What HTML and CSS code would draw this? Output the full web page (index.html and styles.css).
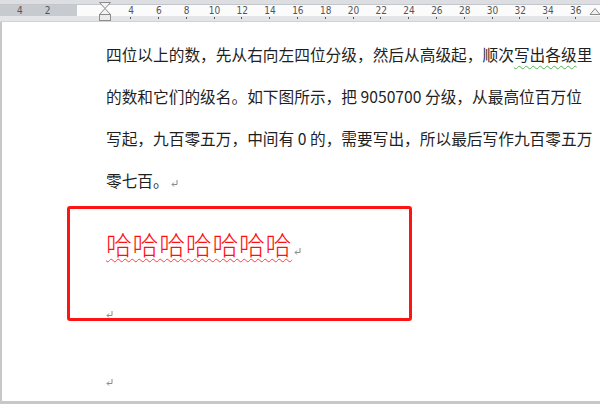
FILE: index.html
```html
<!DOCTYPE html>
<html lang="zh-CN">
<head>
<meta charset="utf-8">
<title>文档</title>
<link rel="stylesheet" href="styles.css">
</head>
<body>
<div class="ruler">
  <div class="ruler-top"></div>
  <div class="ruler-band">
    <span class="num">4</span><span class="num">2</span><span class="num"></span><span class="num"></span><span class="num">4</span><span class="num">6</span><span class="num">8</span><span class="num">10</span><span class="num">12</span><span class="num">14</span><span class="num">16</span><span class="num">18</span><span class="num">20</span><span class="num">22</span><span class="num">24</span><span class="num">26</span><span class="num">28</span><span class="num">30</span><span class="num">32</span><span class="num">34</span><span class="num">36</span>
  </div>
  <div class="ruler-ticks">
    <span class="tick"></span><span class="tick"></span><span class="tick"></span><span class="tick"></span><span class="tick on"></span><span class="tick on"></span><span class="tick on"></span><span class="tick on"></span><span class="tick on"></span><span class="tick on"></span><span class="tick on"></span><span class="tick on"></span><span class="tick on"></span><span class="tick on"></span><span class="tick on"></span><span class="tick on"></span><span class="tick on"></span><span class="tick on"></span><span class="tick on"></span><span class="tick on"></span><span class="tick on"></span>
  </div>
  <svg class="indent-marker" width="14" height="20" viewBox="0 0 14 20">
    <path d="M1.5 0.5 H12.5 L7 6.5 Z" fill="#f2f2f2" stroke="#8c8c8c"/>
    <path d="M7 6.5 L1.5 12.5 H12.5 Z" fill="#f2f2f2" stroke="#8c8c8c"/>
    <rect x="1.5" y="12.5" width="11" height="6" fill="#ececec" stroke="#8c8c8c"/>
  </svg>
  <svg class="right-marker" width="12" height="10" viewBox="0 0 12 10">
    <path d="M1 8.5 L6 2.5 L11 8.5 Z" fill="#f0f0f0" stroke="#8c8c8c"/>
  </svg>
</div>

<div class="page">
  <div class="doc">
    <p class="para">四位以上的数，先从右向左四位分级，然后从高级起，顺次<span class="grammar">写出各级</span>里<br>的数和它们的级名。如下图所示，把 9050700 分级，从最高位百万位<br>写起，九百零五万，中间有 0 的，需要写出，所以最后写作九百零五万<br>零七百。<svg class="ret" width="7" height="7" viewBox="0 0 7 7"><path d="M6 0 V4.5 H1.2" fill="none" stroke="#8a8a8a"/><path d="M3 2.5 L1 4.5 L3 6.5" fill="none" stroke="#8a8a8a"/></svg></p>
    <p class="ha"><span class="spell">哈哈哈哈哈哈哈</span><svg class="ret" width="7" height="7" viewBox="0 0 7 7"><path d="M6 0 V4.5 H1.2" fill="none" stroke="#8a8a8a"/><path d="M3 2.5 L1 4.5 L3 6.5" fill="none" stroke="#8a8a8a"/></svg></p>
    <p class="empty first"><svg class="ret" width="7" height="7" viewBox="0 0 7 7"><path d="M6 0 V4.5 H1.2" fill="none" stroke="#8a8a8a"/><path d="M3 2.5 L1 4.5 L3 6.5" fill="none" stroke="#8a8a8a"/></svg></p>
    <p class="empty second"><svg class="ret" width="7" height="7" viewBox="0 0 7 7"><path d="M6 0 V4.5 H1.2" fill="none" stroke="#8a8a8a"/><path d="M3 2.5 L1 4.5 L3 6.5" fill="none" stroke="#8a8a8a"/></svg></p>
  </div>
  <div class="red-box"></div>
</div>
<div class="bottom-bar"></div>
</body>
</html>
```

FILE: styles.css
```css
html, body {
  margin: 0;
  padding: 0;
}
body {
  width: 600px;
  height: 404px;
  overflow: hidden;
  background: #ffffff;
  position: relative;
  font-family: "Noto Sans CJK SC", "Noto Sans", sans-serif;
}
.ruler {
  position: relative;
  height: 22px;
  background: #e3e4e6;
}
.ruler-top {
  height: 4px;
  background: #dcdee1;
}
.ruler-band {
  display: flex;
  box-sizing: border-box;
  height: 12px;
  padding-left: 6px;
  background: linear-gradient(to right, #c7cbd0 0, #c7cbd0 77px, #fbfbfb 77px, #fbfbfb 100%);
  border-top: 1px solid #c3c6ca;
}
.num {
  flex: 0 0 27.8px;
  text-align: center;
  font-family: "Liberation Sans Narrow", "DejaVu Sans Condensed", "Liberation Sans", sans-serif;
  font-size: 10px;
  line-height: 11px;
  color: #555555;
}
.ruler-ticks {
  display: flex;
  height: 5px;
  padding-left: 6px;
  background: #e4e5e7;
  border-bottom: 1px solid #d0d2d5;
}
.tick {
  flex: 0 0 27.8px;
  position: relative;
}
.tick.on::after {
  content: "";
  position: absolute;
  left: 13px;
  top: 1px;
  width: 1px;
  height: 2px;
  background: #5a5a5a;
}
.indent-marker {
  position: absolute;
  left: 98px;
  top: 2px;
}
.right-marker {
  position: absolute;
  left: 589px;
  top: 6px;
}
.page {
  position: relative;
  height: 379px;
  border-left: 2px solid #c8c8c8;
  box-sizing: border-box;
}
.doc {
  padding-left: 104px;
  padding-top: 12px;
}
.doc p {
  margin: 0;
  white-space: nowrap;
}
.para {
  font-size: 15.7px;
  letter-spacing: 0;
  line-height: 42px;
  color: #1f1f1f;
}
.grammar {
  text-decoration: underline wavy #52b552;
  text-decoration-thickness: 1px;
  text-underline-offset: 4px;
}
.ret {
  display: inline-block;
  vertical-align: baseline;
  margin-left: 2px;
}
.ha {
  margin-top: 22px !important;
  font-size: 26px;
  font-weight: 300;
  letter-spacing: 0.6px;
  line-height: 40px;
  color: #ff1010;
}
.spell {
  text-decoration: underline wavy #ff4040;
  text-decoration-thickness: 1px;
  text-underline-offset: 3px;
}
.empty {
  font-size: 10px;
  line-height: 20px;
}
.empty .ret {
  margin-left: 0;
}
.empty.first {
  margin-top: 40px !important;
}
.empty.second {
  margin-top: 48px !important;
}
.red-box {
  position: absolute;
  left: 65px;
  top: 184px;
  width: 345px;
  height: 115px;
  box-sizing: border-box;
  border: 3px solid #ff1414;
  border-radius: 3px;
}
.bottom-bar {
  height: 3px;
  background: #c8c8c8;
}
```
